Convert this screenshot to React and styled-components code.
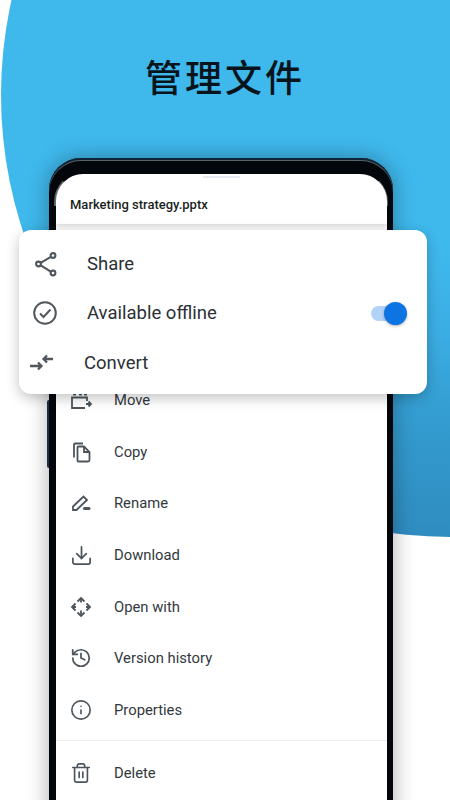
import React from 'react'
import styled, { createGlobalStyle } from 'styled-components'
import { Download, History, Info, Trash2 } from 'lucide-react'

const Global = createGlobalStyle`
  html, body { margin: 0; padding: 0; background: #fff; }
  * { box-sizing: border-box; }
`

const Page = styled.div`
  position: relative;
  width: 450px;
  height: 800px;
  overflow: hidden;
  background: #fff;
  font-family: Roboto, "Liberation Sans", sans-serif;
`
const Blob = styled.div`
  position: absolute;
  left: 1px;
  top: -347px;
  width: 898px;
  height: 884px;
  border-radius: 50%;
  background: linear-gradient(180deg, #3fb8ec 68%, #3bade3 77%, #349dd1 86%, #2f8cc0 100%);
`
const Content = styled.div`
  position: relative;
  display: flex;
  flex-direction: column;
  align-items: center;
`
const Title = styled.h1`
  margin: 50px 0 0;
  height: 52px;
  font-family: "Noto Sans CJK SC", sans-serif;
  font-size: 37px;
  line-height: 52px;
  font-weight: 500;
  letter-spacing: 3px;
  color: #07141c;
`
const Phone = styled.div`
  position: relative;
  margin: 56px 8px 0 0;
  width: 344px;
  height: 700px;
  padding: 16px 6px 0 7px;
  background: #03060a;
  border-radius: 32px 32px 0 0;
  box-shadow: 0 0 22px rgba(0, 0, 0, 0.32), inset 0 2px 0 #0d2536, inset 0 3px 0 #59636b;
`
const SideButton = styled.div`
  position: absolute;
  left: -2px;
  top: 242px;
  width: 2px;
  height: 68px;
  border-radius: 2px 0 0 2px;
  background: #1a3048;
`
const Glint = styled.div`
  position: absolute;
  top: 14px;
  ${(p) => p.$side}: 5px;
  width: 30px;
  height: 34px;
  ${(p) => `border-${p.$side}: 3px solid #5f6468;`}
  border-top: 3px solid transparent;
  border-top-${(p) => p.$side}-radius: 30px;
`
const Screen = styled.div`
  position: relative;
  height: 100%;
  background: #fff;
  border-radius: 27px 27px 0 0;
  overflow: hidden;
`
const Speaker = styled.div`
  position: absolute;
  left: 147px;
  top: 2px;
  width: 37px;
  height: 2px;
  background: #e6ebf1;
`
const Header = styled.div`
  position: relative;
  height: 50px;
  padding: 16px 0 0 14px;
  font-size: 13px;
  line-height: 30px;
  font-weight: 500;
  color: #1b1f23;
  box-shadow: 0 2px 5px rgba(0, 0, 0, 0.16);
`
const List = styled.div`
  display: flex;
  flex-direction: column;
  padding-top: 150.5px;
`
const Row = styled.div`
  display: flex;
  align-items: center;
  height: 51.6px;
  padding-left: 13px;
  gap: 21px;
  font-size: 14.8px;
  color: #33383d;
`
const IconSlot = styled.span`
  display: flex;
  flex: none;
  align-items: center;
  justify-content: center;
  width: 24px;
  height: 24px;
  color: #4c555c;
`
const Divider = styled.div`
  height: 1px;
  margin: 4.500px 0 6px;
  background: #eceded;
`
const Card = styled.div`
  position: absolute;
  left: 19px;
  top: 230px;
  width: 408px;
  height: 164px;
  padding-top: 9px;
  background: #fff;
  border-radius: 12px;
  box-shadow: 0 4px 13px rgba(0, 0, 0, 0.24);
`
const CardRow = styled.div`
  display: flex;
  align-items: center;
  height: 49.5px;
  padding: 0 24px 0 ${(p) => p.$left}px;
  gap: ${(p) => p.$gap}px;
  font-size: 18.5px;
  color: #2b3035;
  svg {
    flex: none;
    color: #50585e;
  }
`
const Label = styled.span`
  flex: 1;
`
const Track = styled.div`
  position: relative;
  width: 32px;
  height: 15px;
  border-radius: 8px;
  background: #b3d2f8;
`
const Thumb = styled.div`
  position: absolute;
  right: -4px;
  top: -4px;
  width: 23px;
  height: 23px;
  border-radius: 50%;
  background: #0d74e4;
  box-shadow: 0 1px 3px rgba(0, 0, 0, 0.3);
`

const Icon = ({ children }) => (
  <svg width="24" height="24" viewBox="-2 -2 24 24" fill="none" stroke="currentColor" strokeWidth="1.8">
    {children}
  </svg>
)
const MoveFileIcon = () => (
  <Icon>
    <path d="M2 4.500h3M8 4.500h3M13 4.500h3" />
    <path d="M16 11V7.500H1V18h13" />
    <path d="M15 14h5M17.500 11.500l2.500 2.500-2.500 2.500" />
  </Icon>
)
const CopyIcon = () => (
  <Icon>
    <path d="M3 15.500V2.500a1 1 0 0 1 1-1h8" />
    <path d="M6.500 5.500a1 1 0 0 1 1-1h5.500l5.500 5.500v8a1.500 1.500 0 0 1-1.500 1.500H7.500a1 1 0 0 1-1-1z" />
    <path d="M13 4.500v5.500h5.500" />
  </Icon>
)
const RenameIcon = () => (
  <Icon>
    <path d="M2 17v-3.500L12.500 3.500 16 7 5.500 17z" />
    <path d="M13.500 15.500h4.500" strokeWidth="3" strokeLinecap="round" />
  </Icon>
)
const OpenWithIcon = () => (
  <Icon>
    <path d="M6.500 4.500L10 1l3.500 3.500M6.500 15.500L10 19l3.500-3.500" />
    <path d="M4.500 6.500L1 10l3.500 3.500M15.500 6.500L19 10l-3.500 3.500" />
    <path d="M10 1.500v4M10 13.500v5M1.500 10h3.500M15 10h3.500" />
  </Icon>
)
const ShareIcon = () => (
  <svg width="24" height="26" viewBox="0 0 24 26" fill="none" stroke="currentColor" strokeWidth="2.1">
    <circle cx="19" cy="4.500" r="2.400" />
    <circle cx="4.500" cy="13" r="2.400" />
    <circle cx="19" cy="22" r="2.400" />
    <path d="M6.700 11.800L16.800 5.800M6.700 14.300l10.100 6.400" />
  </svg>
)
const OfflineIcon = () => (
  <svg width="24" height="24" viewBox="0 0 24 24" fill="none" stroke="currentColor" strokeWidth="2">
    <circle cx="12" cy="12" r="10.800" />
    <path d="M7 12.500l3.500 3.500 7-7.500" />
  </svg>
)
const ConvertIcon = () => (
  <svg width="24" height="20" viewBox="0 0 24 20" fill="none" stroke="currentColor" strokeWidth="2.300">
    <path d="M0 13h11M8 9.500l3.500 3.500L8 16.500" />
    <path d="M23 6H14M17 2.500L13.500 6 17 9.500" />
  </svg>
)

const items = [
  ['Move', <MoveFileIcon key="m" />],
  ['Copy', <CopyIcon key="c" />],
  ['Rename', <RenameIcon key="r" />],
  ['Download', <Download key="d" size={23} strokeWidth={1.8} />],
  ['Open with', <OpenWithIcon key="o" />],
  ['Version history', <History key="v" size={22} strokeWidth={1.9} />],
  ['Properties', <Info key="p" size={22} strokeWidth={1.8} />],
]

const App = () => {
  return (
    <Page>
      <Global />
      <Blob />
      <Content>
        <Title>管理文件</Title>
        <Phone>
          <SideButton />
          <Glint $side="left" />
          <Glint $side="right" />
          <Screen>
            <Speaker />
            <Header>Marketing strategy.pptx</Header>
            <List>
              {items.map(([label, icon]) => (
                <Row key={label}>
                  <IconSlot>{icon}</IconSlot>
                  <span>{label}</span>
                </Row>
              ))}
              <Divider />
              <Row>
                <IconSlot>
                  <Trash2 size={22} strokeWidth={1.8} />
                </IconSlot>
                <span>Delete</span>
              </Row>
            </List>
          </Screen>
        </Phone>
      </Content>
      <Card>
        <CardRow $left={15} $gap={29}>
          <ShareIcon />
          <Label>Share</Label>
        </CardRow>
        <CardRow $left={14} $gap={30}>
          <OfflineIcon />
          <Label>Available offline</Label>
          <Track>
            <Thumb />
          </Track>
        </CardRow>
        <CardRow $left={11} $gap={30}>
          <ConvertIcon />
          <Label>Convert</Label>
        </CardRow>
      </Card>
    </Page>
  )
}

export default App
